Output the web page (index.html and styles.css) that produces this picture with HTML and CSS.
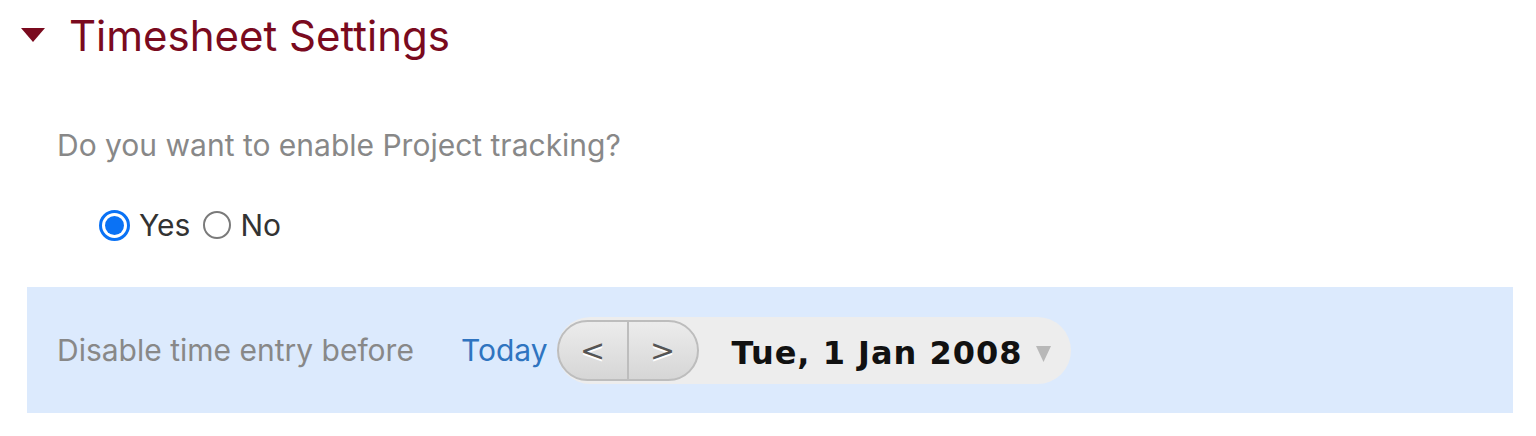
FILE: index.html
```html
<!DOCTYPE html>
<html>
<head>
<meta charset="utf-8">
<link rel="stylesheet" href="styles.css">
</head>
<body>
<div class="page">
  <div class="section-head">
    <svg class="caret" width="24" height="16" viewBox="0 0 24 16"><polygon points="0,0 24,0 12,14" fill="#7a0a1e"/></svg>
    <h1 class="title">Timesheet Settings</h1>
  </div>
  <p class="question">Do you want to enable Project tracking?</p>
  <div class="radios">
    <label class="radio"><span class="dot on"></span>Yes</label>
    <label class="radio"><span class="dot"></span>No</label>
  </div>
  <div class="band">
    <span class="band-label">Disable time entry before</span>
    <a class="today">Today</a>
    <div class="datepicker">
      <div class="nav">
        <span class="nav-btn">&lt;</span>
        <span class="nav-btn">&gt;</span>
      </div>
      <span class="date">Tue, 1 Jan 2008</span>
      <svg class="drop" width="15" height="16" viewBox="0 0 15 16"><polygon points="0,0 15,0 7.5,16" fill="#b8b8b8"/></svg>
    </div>
  </div>
</div>
</body>
</html>
```
FILE: styles.css
```css
html, body { margin: 0; padding: 0; background: #fff; }
body { font-family: Inter, "Noto Sans", sans-serif; }
.page { width: 1536px; height: 436px; position: relative; }
.section-head { display: flex; align-items: center; height: 72px; padding-left: 21px; }
.caret { width: 24px; height: 16px; margin-top: 0; }
.title { margin: 0 0 0 24px; font-weight: 400; font-size: 42px; color: #7a0a1e; line-height: 1; }
.question { margin: 58px 0 0 57px; font-size: 30px; color: #888; line-height: 1; }
.radios { display: flex; align-items: center; margin: 48px 0 0 99px; height: 34px; }
.radio { display: flex; align-items: center; font-size: 30px; line-height: 1; color: #333; margin-right: 13px; }
.dot { width: 28px; height: 28px; border-radius: 50%; border: 2px solid #7a7a7a; box-sizing: border-box; margin-right: 9px; position: relative; }
.dot.on { width: 31px; height: 31px; border: 3px solid #0a72f5; }
.dot.on::after { content: ""; position: absolute; left: 3px; top: 3px; width: 19px; height: 19px; border-radius: 50%; background: #0a72f5; }
.band { position: absolute; left: 27px; top: 287px; width: 1486px; height: 126px; background: #dceafd; display: flex; align-items: center; padding-left: 30px; box-sizing: border-box; }
.band-label { font-size: 30px; color: #888; }
.today { font-size: 30px; color: #2f74c0; margin-left: 47px; }
.datepicker { display: flex; align-items: center; margin-left: 9px; height: 67px; background: #ededed; border-radius: 34px; padding-right: 20px; }
.nav { display: flex; height: 61px; border: 2px solid #bdbdbd; border-radius: 31px; box-sizing: border-box; overflow: hidden; background: linear-gradient(#ececec, #d6d6d6); }
.nav-btn { width: 68px; display: flex; align-items: center; justify-content: center; font-family: "DejaVu Sans", sans-serif; font-size: 30px; color: #555; text-shadow: 0 2px 0 #fff; }
.nav-btn + .nav-btn { border-left: 2px solid #bdbdbd; }
.date { font-family: "DejaVu Sans", sans-serif; font-weight: bold; font-size: 32px; letter-spacing: 1px; color: #111; margin-left: 33px; margin-top: 6px; }
.drop { margin-left: 13px; margin-top: 8px; }
```
